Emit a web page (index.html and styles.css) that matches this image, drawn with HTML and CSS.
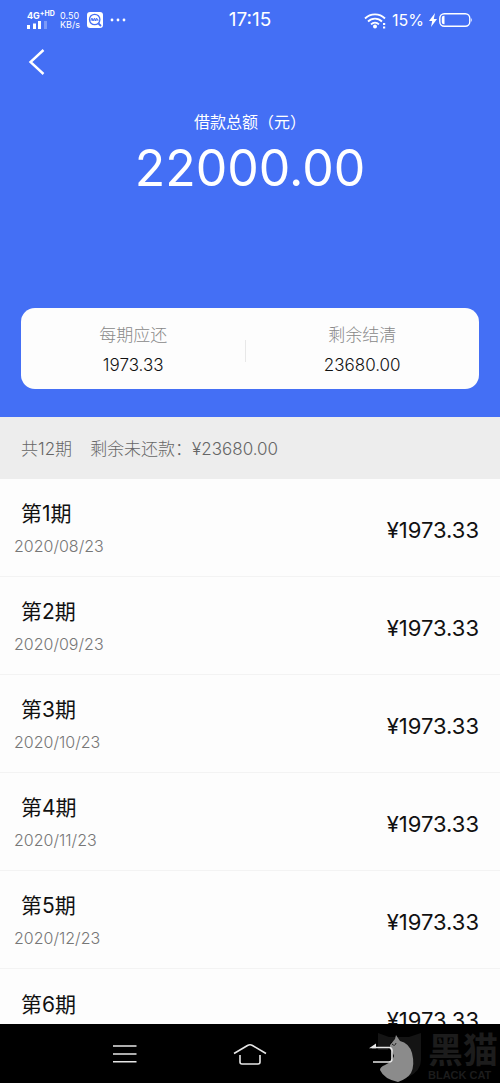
FILE: index.html
```html
<!DOCTYPE html>
<html lang="zh-CN">
<head>
<meta charset="utf-8">
<meta name="viewport" content="width=device-width, initial-scale=1">
<title>借款详情</title>
<link rel="stylesheet" href="styles.css">
</head>
<body>
<div class="app">
  <header class="hero">
    <div class="status">
      <div class="status-left">
        <div class="signal">
          <span class="net">4G<sup>+HD</sup></span>
          <svg width="20" height="8" viewBox="0 0 20 8" fill="#fff" aria-hidden="true"><rect y="4" width="3" height="4"/><rect x="6" y="2.500" width="3" height="5.500"/><rect x="11" width="3" height="8"/><rect x="17" width="3" height="8" opacity=".3"/></svg>
        </div>
        <div class="speed"><span>0.50</span><span>KB/s</span></div>
        <svg width="16" height="16" viewBox="0 0 16 16" aria-hidden="true"><rect width="16" height="16" rx="3" fill="#fff"/><g fill="none" stroke="#456ff5"><circle cx="7.700" cy="7.500" r="5.200" stroke-width="1.300"/><path d="M11.500 11.500 14 14" stroke-width="1.800"/><path d="M3.500 8.500 5 6l1 3 1.500-3 1 3 1-3 1.500 2.500M4 8h7.500" stroke-width=".9"/></g></svg>
        <svg width="16" height="4" viewBox="0 0 16 4" fill="#fff" aria-hidden="true"><circle cx="2" cy="2" r="1.400"/><circle cx="8" cy="2" r="1.400"/><circle cx="14" cy="2" r="1.400"/></svg>
      </div>
      <time class="clock">17:15</time>
      <div class="status-right">
        <svg width="23" height="17" viewBox="0 0 23 17" aria-hidden="true"><g fill="none" stroke="#fff" stroke-width="1.800"><path d="M1 6.500a14 14 0 0 1 20 0"/><path d="M4 9.500a10 10 0 0 1 14 0"/><path d="M7 12.300a6 6 0 0 1 8 0"/></g><circle cx="11" cy="14.500" r="2" fill="#fff"/><path d="M19 11h2.200v2H19zM19 14.500h2.200v2H19z" fill="#fff"/></svg>
        <span class="percent">15%</span>
        <svg width="44" height="16" viewBox="0 0 44 16" aria-hidden="true"><path d="M6 1 0 9h3.200L2 15l6-8H4.800z" fill="#fff"/><rect x="10.800" y="1.700" width="30" height="12.600" rx="4.500" fill="none" stroke="#fff" stroke-width="1.400"/><path d="M15.500 3.700v8.600h-.7a2 2 0 0 1-2-2V5.700a2 2 0 0 1 2-2zM42.300 5.700q1.700 2.300 0 4.600z" fill="#fff"/></svg>
      </div>
    </div>
    <button class="back" aria-label="返回"><svg width="17" height="28" viewBox="0 0 17 28" fill="none" stroke="#fff" stroke-width="2.400" aria-hidden="true"><path d="M15.500 2 2.500 14l13 12"/></svg></button>
    <div class="total">
      <h1 class="total-label">借款总额（元）</h1>
      <p class="total-value">22000.00</p>
    </div>
    <dl class="card">
      <div class="stat"><dt>每期应还</dt><dd>1973.33</dd></div>
      <div class="stat stat-wide"><dt>剩余结清</dt><dd>23680.00</dd></div>
    </dl>
  </header>
  <p class="summary"><span>共12期</span><span>剩余未还款：¥23680.00</span></p>
  <ul class="list">
    <li class="row"><div><h2>第1期</h2><time>2020/08/23</time></div><span class="amount">¥1973.33</span></li>
    <li class="row"><div><h2>第2期</h2><time>2020/09/23</time></div><span class="amount">¥1973.33</span></li>
    <li class="row"><div><h2>第3期</h2><time>2020/10/23</time></div><span class="amount">¥1973.33</span></li>
    <li class="row"><div><h2>第4期</h2><time>2020/11/23</time></div><span class="amount">¥1973.33</span></li>
    <li class="row"><div><h2>第5期</h2><time>2020/12/23</time></div><span class="amount">¥1973.33</span></li>
    <li class="row"><div><h2>第6期</h2></div><span class="amount">¥1973.33</span></li>
  </ul>
  <nav class="nav">
    <button aria-label="最近任务"><svg width="24" height="20" viewBox="0 0 24 20" stroke="#e6e6e6" stroke-width="1.600" aria-hidden="true"><path d="M0 2h23.500M0 10h23.500M0 17.700h23.500"/></svg></button>
    <button aria-label="主页"><svg width="34" height="22" viewBox="0 0 34 22" fill="none" stroke="#e6e6e6" stroke-width="1.600" stroke-linejoin="round" aria-hidden="true"><path d="M1 10.500 14.500 2.500Q17 1 19.500 2.500L33 10.500M7 12v7q0 2 2 2h16q2 0 2-2v-7"/></svg></button>
    <div class="watermark">
      <svg width="46" height="52" viewBox="0 0 46 52" aria-hidden="true"><path d="M2 2 13 6h20L45 2v27q0 11-13 17V15q-6-6-17-4L12 19H2z" fill="#141414"/><path d="M20 4 24 10q9 2 12 12 3 12-1 20-4 6-13 9-14-3-18-12 0-3 5-5 7-3 9-9l-2-5q-3-2-2-6l5-6z" fill="#8b8b8b"/><path d="M16 13q3 3 4-1" fill="none" stroke="#222"/></svg>
      <div class="brand"><span class="brand-cn">黑猫</span><span class="brand-en">BLACK CAT</span></div>
    </div>
    <button class="nav-back" aria-label="后退"><svg width="40" height="24" viewBox="0 0 40 24" fill="none" stroke="#e6e6e6" stroke-width="1.600" aria-hidden="true"><path d="M17 5.500h17q3 0 3 3V17q0 3-3 3H18"/><path d="M14 6.300 21 1.500v4.800z" fill="#e6e6e6" stroke="none"/></svg></button>
  </nav>
</div>
</body>
</html>
```
FILE: styles.css
```css
* { box-sizing: border-box; margin: 0; padding: 0; }
body { font-family: Inter, "Noto Sans CJK SC", sans-serif; font-weight: 400; color: #111; background: #fdfdfd; }
button { border: 0; background: none; color: inherit; cursor: pointer; }
svg { display: block; flex: none; }
.app { height: 100vh; display: flex; flex-direction: column; overflow: hidden; }
.hero { flex: none; background: #446ff5; color: #fff; padding-bottom: 28px; }
.status { display: grid; grid-template-columns: 1fr auto 1fr; align-items: center; height: 40px; padding: 0 27px; }
.status-left, .status-right { display: flex; align-items: center; gap: 7px; }
.status-right { justify-content: flex-end; gap: 5px; }
.signal { display: flex; flex-direction: column; gap: 1px; width: 26px; }
.net { display: flex; font-size: 9px; line-height: 9px; font-weight: 700; }
.net sup { font-size: 7px; line-height: 6px; }
.speed { display: flex; flex-direction: column; font-size: 9px; line-height: 9px; }
.clock { font-size: 19px; line-height: 24px; }
.percent { font-size: 16px; line-height: 20px; }
.back { display: block; margin: 8px 0 0 28px; }
.total { margin-top: 34px; text-align: center; }
.total-label { font-size: 16px; line-height: 24px; font-weight: 400; }
.total-value { font-size: 50px; line-height: 68px; }
.card { display: flex; align-items: center; margin: 106px 21px 0; padding: 13px 0 8px; height: 81px; border-radius: 14px; background: #fdfdfd; }
.stat { flex: 49; text-align: center; }
.stat-wide { flex: 51; background: linear-gradient(#e8e8e8, #e8e8e8) left center / 1px 22px no-repeat; }
.stat dt { font-size: 17px; line-height: 28px; font-weight: 300; color: #888; }
.stat dd { font-size: 17px; line-height: 32px; font-weight: 300; color: #111; }
.summary { flex: none; display: flex; gap: 18px; padding: 2px 21px 0; font-size: 17px; line-height: 60px; font-weight: 300; color: #666; background: #ededed; }
.list { flex: 1; min-height: 0; overflow: hidden; list-style: none; }
.row { display: flex; justify-content: space-between; align-items: center; height: 98px; padding: 5px 21px 0 14px; border-bottom: 1px solid #f3f3f3; }
.row:last-child div { align-self: flex-start; padding-top: 15px; }
.row h2 { padding-left: 7px; font-size: 21px; line-height: 32px; font-weight: 400; }
.row time { display: block; font-size: 16px; line-height: 32px; font-weight: 300; color: #777; }
.amount { font-size: 22px; line-height: 32px; }
.nav { position: relative; flex: none; display: grid; grid-template-columns: repeat(3, 1fr); height: 59px; padding: 0 12.5%; background: #000; }
.nav button { display: flex; align-items: center; justify-content: center; }
.nav-back { position: relative; }
.watermark { position: absolute; right: 2px; bottom: 0; display: flex; gap: 6px; pointer-events: none; }
.brand { display: flex; flex-direction: column; color: #1c1c1c; font-weight: 700; }
.brand-cn { font-size: 35px; line-height: 38px; }
.brand-en { font-family: "Liberation Sans", sans-serif; font-size: 11px; line-height: 12px; white-space: nowrap; }
```
